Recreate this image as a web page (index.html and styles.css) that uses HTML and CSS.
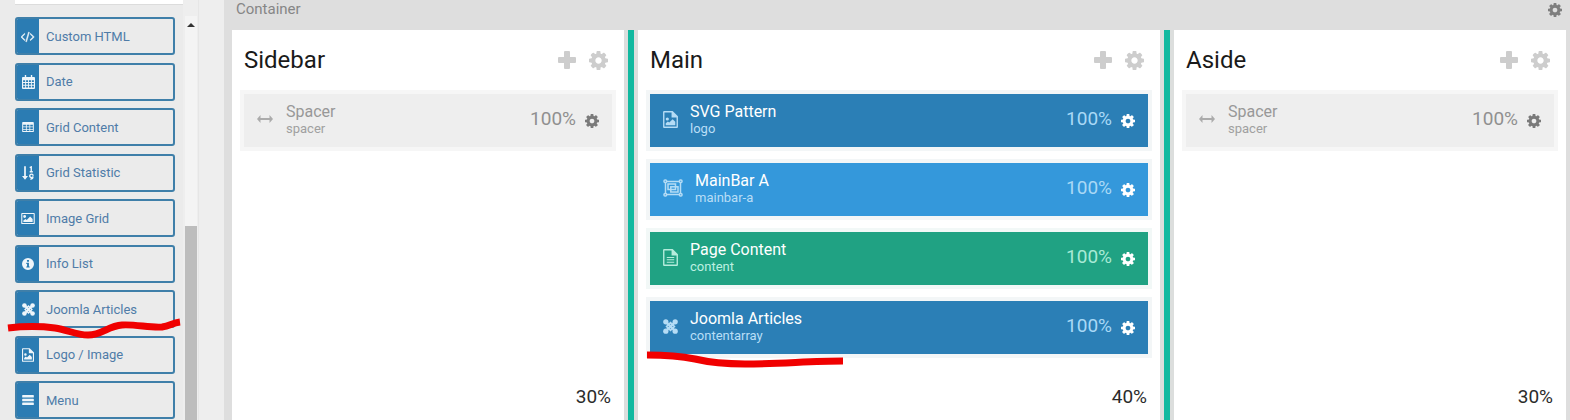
FILE: index.html
```html
<!DOCTYPE html>
<html lang="en">
<head>
<meta charset="utf-8">
<title>Layout builder</title>
<link rel="stylesheet" href="styles.css">
</head>
<body>
<svg class="sprite" xmlns="http://www.w3.org/2000/svg">
  <symbol id="i-cog" viewBox="128 128 1536 1536"><path fill="currentColor" d="M1152 896q0-106-75-181t-181-75-181 75-75 181 75 181 181 75 181-75 75-181zm512-109v222q0 12-8 23t-20 13l-185 28q-19 54-39 91 35 50 107 138 10 12 10 25t-9 23q-27 37-99 108t-94 71q-12 0-26-9l-138-108q-44 23-91 38-16 136-29 186-7 28-36 28h-222q-14 0-24.5-8.5t-11.5-21.5l-28-184q-49-16-90-37l-141 107q-10 9-25 9-14 0-25-11-126-114-165-168-7-10-7-23 0-12 8-23 15-21 51-66.5t54-70.5q-27-50-41-99l-183-27q-13-2-21-12.5t-8-23.5v-222q0-12 8-23t19-13l186-28q14-46 39-92-40-57-107-138-10-12-10-24 0-10 9-23 26-36 98.5-107.5t94.5-71.5q13 0 26 10l138 107q44-23 91-38 16-136 29-186 7-28 36-28h222q14 0 24.5 8.5t11.5 21.5l28 184q49 16 90 37l142-107q9-9 24-9 13 0 25 10 129 119 165 170 7 8 7 22 0 12-8 23-15 21-51 66.5t-54 70.5q26 50 41 98l183 28q13 2 21 12.5t8 23.5z"/></symbol>
  <symbol id="i-plus" viewBox="0 0 18 18"><path fill="currentColor" d="M7 0h4a1 1 0 0 1 1 1v5h5a1 1 0 0 1 1 1v4a1 1 0 0 1-1 1h-5v5a1 1 0 0 1-1 1H7a1 1 0 0 1-1-1v-5H1a1 1 0 0 1-1-1V7a1 1 0 0 1 1-1h5V1a1 1 0 0 1 1-1z"/></symbol>
  <symbol id="i-code" viewBox="0 0 1920 1792"><path fill="currentColor" stroke="currentColor" stroke-width="70" d="M553 1399l-50 50q-10 10-23 10t-23-10l-466-466q-10-10-10-23t10-23l466-466q10-10 23-10t23 10l50 50q10 10 10 23t-10 23l-393 393 393 393q10 10 10 23t-10 23zm591-1067l-373 1291q-4 13-15.5 19.5t-23.5 2.5l-62-17q-13-4-19.5-15.5t-2.5-24.5l373-1291q4-13 15.5-19.5t23.5-2.5l62 17q13 4 19.5 15.5t2.5 24.5zm657 651l-466 466q-10 10-23 10t-23-10l-50-50q-10-10-10-23t10-23l393-393-393-393q-10-10-10-23t10-23l50-50q10-10 23-10t23 10l466 466q10 10 10 23t-10 23z"/></symbol>
  <symbol id="i-calendar" viewBox="0 0 14 15"><path fill="currentColor" fill-rule="evenodd" d="M3 0h1.5v2h5V0H11v2h2a1 1 0 0 1 1 1v11a1 1 0 0 1-1 1H1a1 1 0 0 1-1-1V3a1 1 0 0 1 1-1h2zM1.2 5.5v2h2.2v-2zm3.2 0v2h2.1v-2zm3.1 0v2h2.1v-2zm3.1 0v2h2.2v-2zM1.2 8.5v2h2.2v-2zm3.2 0v2h2.1v-2zm3.1 0v2h2.1v-2zm3.1 0v2h2.2v-2zM1.2 11.5v2h2.2v-2zm3.2 0v2h2.1v-2zm3.1 0v2h2.1v-2zm3.1 0v2h2.2v-2z"/></symbol>
  <symbol id="i-table" viewBox="0 0 14 12"><path fill="currentColor" fill-rule="evenodd" d="M1 0h12a1 1 0 0 1 1 1v10a1 1 0 0 1-1 1H1a1 1 0 0 1-1-1V1a1 1 0 0 1 1-1zm.2 3.2v2.1h3.3V3.200zm4.300 0v2.1h3.200V3.200zm4.200 0v2.1h3.100V3.200zM1.200 6.300v2h3.300v-2zm4.300 0v2h3.200v-2zm4.200 0v2h3.100v-2zM1.200 9.300v1.500h3.300V9.300zm4.300 0v1.500h3.200V9.300zm4.200 0v1.500h3.100V9.300z"/></symbol>
  <symbol id="i-sort" viewBox="0 0 14 16"><path fill="currentColor" d="M2.500 0h2v11.500H7L3.500 16 0 11.500h2.500z"/><path fill="none" stroke="currentColor" stroke-width="1.600" d="M9 1.800 10.800.9v5.600M9 6.600h3.600M13 11.200a2 2 0 1 0-.2 1c0 2-.8 3-3 3.100"/></symbol>
  <symbol id="i-image" viewBox="0 0 16 13"><path fill="currentColor" fill-rule="evenodd" d="M1 0h14a1 1 0 0 1 1 1v11a1 1 0 0 1-1 1H1a1 1 0 0 1-1-1V1a1 1 0 0 1 1-1zm.3 1.300v10.400h13.400V1.300zM4 2.500a1.700 1.700 0 1 1 0 3.400 1.700 1.700 0 0 1 0-3.400zM2.500 10.500V9l2.500-2 1.500 1.200L10.500 4l3 3v3.500z"/></symbol>
  <symbol id="i-info" viewBox="0 0 14 14"><path fill="currentColor" fill-rule="evenodd" d="M7 0a7 7 0 1 1 0 14A7 7 0 0 1 7 0zM5.800 2.200v2.100h2.400V2.200zM5 5.600v1.300h.9v3H5v1.300h4v-1.300h-.9V5.600z"/></symbol>
  <symbol id="i-joomla" viewBox="0 0 16 16"><g fill="currentColor"><circle cx="3" cy="3" r="2.800"/><circle cx="13" cy="3" r="2.800"/><circle cx="3" cy="13" r="2.800"/><circle cx="13" cy="13" r="2.800"/></g><path fill="none" stroke="currentColor" stroke-width="2.600" d="M3.500 3.500 12.500 12.500M12.500 3.500 3.500 12.500"/><path fill="none" stroke="currentColor" stroke-width="1.700" d="M8 3.800 12.200 8 8 12.200 3.800 8z"/></symbol>
  <symbol id="i-file-image" viewBox="0 0 14 16"><path fill="currentColor" fill-rule="evenodd" d="M1 0h8l5 5v10a1 1 0 0 1-1 1H1a1 1 0 0 1-1-1V1a1 1 0 0 1 1-1zm.3 1.300v13.400h11.400V6H8V1.300zM4 6a1.500 1.500 0 1 1 0 3 1.500 1.500 0 0 1 0-3zM2.500 13.300V11.500l2-1.700 1.300 1L9 7.700l2.500 2.500v3.100z"/></symbol>
  <symbol id="i-file-text" viewBox="0 0 14 16"><path fill="currentColor" fill-rule="evenodd" d="M1 0h8l5 5v10a1 1 0 0 1-1 1H1a1 1 0 0 1-1-1V1a1 1 0 0 1 1-1zm.3 1.300v13.400h11.400V6H8V1.300zM3.500 7.500h7v1h-7zm0 2.200h7v1h-7zm0 2.200h7v1h-7z"/></symbol>
  <symbol id="i-bars" viewBox="0 0 14 12"><path fill="currentColor" d="M.7 0h12.600a.7.7 0 0 1 .7.7v1.600a.7.7 0 0 1-.7.7H.7a.7.7 0 0 1-.7-.7V.7A.7.7 0 0 1 .7 0zm0 4.500h12.600a.7.7 0 0 1 .7.700v1.600a.7.7 0 0 1-.7.700H.7a.7.7 0 0 1-.7-.700V5.200a.7.7 0 0 1 .7-.700zm0 4.500h12.600a.7.7 0 0 1 .7.700v1.600a.7.7 0 0 1-.7.700H.7a.7.7 0 0 1-.7-.700V9.700A.7.7 0 0 1 .7 9z"/></symbol>
  <symbol id="i-arrows" viewBox="0 0 16 8"><path fill="currentColor" d="M3.500 0v3h9V0L16 4l-3.500 4V5h-9v3L0 4z"/></symbol>
  <symbol id="i-group" viewBox="0 0 20 18"><g fill="none" stroke="currentColor" stroke-width="1.500"><path d="M3 2.500h14M3 15.500h14M2.500 3v12M17.500 3v12"/><rect x="1" y="1" width="2.600" height="2.600" rx="1"/><rect x="16.400" y="1" width="2.600" height="2.600" rx="1"/><rect x="1" y="14.400" width="2.600" height="2.600" rx="1"/><rect x="16.400" y="14.400" width="2.600" height="2.600" rx="1"/><rect x="5" y="5" width="7.500" height="5.500"/><rect x="7.800" y="7.800" width="7.200" height="5.200"/></g></symbol>
</svg>

<div class="app">
  <aside class="side">
    <div class="panel">
      <div class="search"></div>
      <ul class="blocks">
        <li class="block"><span class="block-icon"><svg class="ic-code"><use href="#i-code"/></svg></span><span class="block-name">Custom HTML</span></li>
        <li class="block"><span class="block-icon"><svg class="ic-cal"><use href="#i-calendar"/></svg></span><span class="block-name">Date</span></li>
        <li class="block"><span class="block-icon"><svg class="ic-table"><use href="#i-table"/></svg></span><span class="block-name">Grid Content</span></li>
        <li class="block"><span class="block-icon"><svg class="ic-sort"><use href="#i-sort"/></svg></span><span class="block-name">Grid Statistic</span></li>
        <li class="block"><span class="block-icon"><svg class="ic-image"><use href="#i-image"/></svg></span><span class="block-name">Image Grid</span></li>
        <li class="block"><span class="block-icon"><svg class="ic-info"><use href="#i-info"/></svg></span><span class="block-name">Info List</span></li>
        <li class="block"><span class="block-icon"><svg class="ic-joomla"><use href="#i-joomla"/></svg></span><span class="block-name">Joomla Articles</span></li>
        <li class="block"><span class="block-icon"><svg class="ic-file"><use href="#i-file-image"/></svg></span><span class="block-name">Logo / Image</span></li>
        <li class="block"><span class="block-icon"><svg class="ic-bars"><use href="#i-bars"/></svg></span><span class="block-name">Menu</span></li>
      </ul>
    </div>
    <div class="rail">
      <div class="scrollbar">
        <div class="scroll-track"><span class="scroll-arrow"></span></div>
        <div class="scroll-thumb"></div>
      </div>
    </div>
  </aside>

  <main class="container">
    <header class="container-head">
      <span class="container-title">Container</span>
      <svg class="head-cog"><use href="#i-cog"/></svg>
    </header>
    <div class="columns">
      <section class="col col-side">
        <div class="col-head">
          <h2 class="col-title">Sidebar</h2>
          <svg class="col-plus"><use href="#i-plus"/></svg>
          <svg class="col-cog"><use href="#i-cog"/></svg>
        </div>
        <div class="item item-spacer">
          <svg class="item-icon ic-arrows"><use href="#i-arrows"/></svg>
          <div class="item-text"><div class="item-name">Spacer</div><div class="item-sub">spacer</div></div>
          <span class="item-pct">100%</span>
          <svg class="item-cog"><use href="#i-cog"/></svg>
        </div>
        <div class="col-pct">30%</div>
      </section>
      <div class="gutter"></div>
      <section class="col col-main">
        <div class="col-head">
          <h2 class="col-title">Main</h2>
          <svg class="col-plus"><use href="#i-plus"/></svg>
          <svg class="col-cog"><use href="#i-cog"/></svg>
        </div>
        <div class="item item-blue">
          <svg class="item-icon ic-file-lg"><use href="#i-file-image"/></svg>
          <div class="item-text"><div class="item-name">SVG Pattern</div><div class="item-sub">logo</div></div>
          <span class="item-pct">100%</span>
          <svg class="item-cog"><use href="#i-cog"/></svg>
        </div>
        <div class="item item-sky">
          <svg class="item-icon ic-group"><use href="#i-group"/></svg>
          <div class="item-text"><div class="item-name">MainBar A</div><div class="item-sub">mainbar-a</div></div>
          <span class="item-pct">100%</span>
          <svg class="item-cog"><use href="#i-cog"/></svg>
        </div>
        <div class="item item-green">
          <svg class="item-icon ic-file-lg"><use href="#i-file-text"/></svg>
          <div class="item-text"><div class="item-name">Page Content</div><div class="item-sub">content</div></div>
          <span class="item-pct">100%</span>
          <svg class="item-cog"><use href="#i-cog"/></svg>
        </div>
        <div class="item item-blue">
          <svg class="item-icon ic-file-lg"><use href="#i-joomla"/></svg>
          <div class="item-text"><div class="item-name">Joomla Articles</div><div class="item-sub">contentarray</div></div>
          <span class="item-pct">100%</span>
          <svg class="item-cog"><use href="#i-cog"/></svg>
        </div>
        <div class="col-pct">40%</div>
      </section>
      <div class="gutter"></div>
      <section class="col col-side">
        <div class="col-head">
          <h2 class="col-title">Aside</h2>
          <svg class="col-plus"><use href="#i-plus"/></svg>
          <svg class="col-cog"><use href="#i-cog"/></svg>
        </div>
        <div class="item item-spacer">
          <svg class="item-icon ic-arrows"><use href="#i-arrows"/></svg>
          <div class="item-text"><div class="item-name">Spacer</div><div class="item-sub">spacer</div></div>
          <span class="item-pct">100%</span>
          <svg class="item-cog"><use href="#i-cog"/></svg>
        </div>
        <div class="col-pct">30%</div>
      </section>
    </div>
  </main>
</div>

<svg class="scribble" viewBox="0 0 1570 420" xmlns="http://www.w3.org/2000/svg">
  <path d="M8 328C25 326 40 326 55 328C68 330 76 335 88 335C102 335 108 326 122 325C135 324 150 328 162 327C170 326 172 323 180 322"/>
  <path d="M647 355C665 355 680 356 695 359C712 363 725 364 745 364C780 364 810 361 843 361"/>
</svg>
</body>
</html>
```

FILE: styles.css
```css
* { box-sizing: border-box; }
html, body { margin: 0; padding: 0; height: 420px; overflow: hidden; }
body { font-family: Roboto, "Liberation Sans", sans-serif; background: #eee; position: relative; }
.sprite { display: none; }
svg { display: block; flex: none; }

.app { display: flex; width: 1570px; height: 420px; }

/* left block list */
.side { display: flex; width: 224px; height: 420px; flex: none; background: #eeeeee; }
.panel { width: 183px; height: 420px; flex: none; padding-left: 15px; background: #ebebeb; overflow: hidden; }
.search { height: 5px; background: #fff; border-bottom: 1px solid #dcdcdc; }
.blocks { list-style: none; margin: 12px 0 0; padding: 0; }
.block { display: flex; align-items: center; width: 160px; height: 38px; margin-bottom: 7.5px; border: 2px solid #3f7fa9; border-radius: 3px; background: #ebebeb; overflow: hidden; }
.block-icon { display: flex; align-items: center; justify-content: center; width: 22px; height: 100%; flex: none; background: #2b7cb3; color: #eef5fa; }
.block-name { margin-left: 7px; font-size: 13px; color: #4f7ca8; white-space: nowrap; }
.ic-code { width: 14px; height: 13px; }
.ic-cal { width: 13px; height: 14px; }
.ic-table { width: 12px; height: 10px; }
.ic-sort { width: 12px; height: 14px; }
.ic-image { width: 14px; height: 11px; }
.ic-info { width: 12px; height: 12px; }
.ic-joomla { width: 13px; height: 13px; }
.ic-file { width: 12px; height: 14px; }
.ic-bars { width: 12px; height: 10px; }

.rail { width: 16px; flex: none; padding: 16px 1px 0 2px; border-right: 1px solid #e6e6e6; }
.scrollbar { display: flex; flex-direction: column; height: 100%; background: #f4f4f4; }
.scroll-track { height: 210px; flex: none; display: flex; justify-content: center; padding-top: 7px; }
.scroll-arrow { width: 0; height: 0; border-left: 4px solid transparent; border-right: 4px solid transparent; border-bottom: 4px solid #333; }
.scroll-thumb { flex: 1; background: #bdbdbd; }

/* container */
.container { display: flex; flex-direction: column; flex: 1; height: 420px; background: #dedede; padding: 0 4px 0 8px; }
.container-head { display: flex; justify-content: space-between; align-items: flex-start; height: 30px; flex: none; padding: 0 4px; }
.container-title { font-size: 15px; line-height: 18px; color: #868686; }
.head-cog { width: 14px; height: 14px; margin-top: 3px; color: #7e7e7e; }

.columns { display: flex; flex: 1; min-height: 0; }
.col { display: flex; flex-direction: column; background: #fff; padding: 0 8px; height: 390px; }
.col-side { width: 392px; }
.col-main { width: 522px; }
.gutter { width: 14px; flex: none; padding: 0 4px; background: #dcdedd; display: flex; }
.gutter::before { content: ""; flex: 1; background: #12b9a0; }

.col-head { display: flex; align-items: center; height: 60px; flex: none; padding: 0 8px 0 4px; }
.col-title { flex: 1; margin: 0; font-size: 24px; font-weight: 400; line-height: 60px; color: #1a1a1a; }
.col-plus { width: 18px; height: 18px; color: #cdcdcd; }
.col-cog { width: 19px; height: 19px; margin-left: 13px; color: #cdcdcd; }

.item { display: flex; align-items: center; height: 61px; flex: none; margin-bottom: 8px; padding: 0 13px 0 13px; border: 4px solid #f3f6f7; color: #fff; }
.item-spacer { background: #eeeeee; border-color: #f6f6f6; color: #999; }
.item-blue { background: #2b7fb6; }
.item-sky { background: #3498db; }
.item-green { background: #20a283; border-color: #f2f8f7; }
.item-icon { margin: -3px 12px 0 0; color: #b5dcf5; }
.item-green .item-icon { color: #b5ecdc; }
.item-spacer .item-icon { color: #ababab; }
.ic-arrows { width: 16px; height: 8px; margin-right: 13px; }
.ic-file-lg { width: 15px; height: 17px; }
.ic-group { width: 20px; height: 18px; }
.item-text { flex: 1; min-width: 0; margin-top: -3px; }
.item-name { font-size: 16px; line-height: 18px; font-weight: 400; color: #fff; }
.item-spacer .item-name { color: #989898; }
.item-sub { font-size: 13px; line-height: 15px; color: #b9def6; }
.item-green .item-sub { color: #bdf0e1; }
.item-spacer .item-sub { color: #a0a0a0; }
.item-pct { font-size: 19px; line-height: 22px; margin-top: -4px; color: #a9d9f6; }
.item-green .item-pct { color: #a8ead6; }
.item-spacer .item-pct { color: #909090; }
.item-cog { width: 14px; height: 14px; margin-left: 9px; color: #fff; }
.item-spacer .item-cog { color: #7a7a7a; }

.col-pct { margin-top: auto; padding: 0 5px 12px 0; text-align: right; font-size: 19px; line-height: 22px; color: #2b2b2b; }

/* marker strokes drawn on top of the screenshot */
.scribble { position: absolute; left: 0; top: 0; width: 1570px; height: 420px; pointer-events: none; }
.scribble path { fill: none; stroke: #f00000; stroke-width: 7px; }
```
